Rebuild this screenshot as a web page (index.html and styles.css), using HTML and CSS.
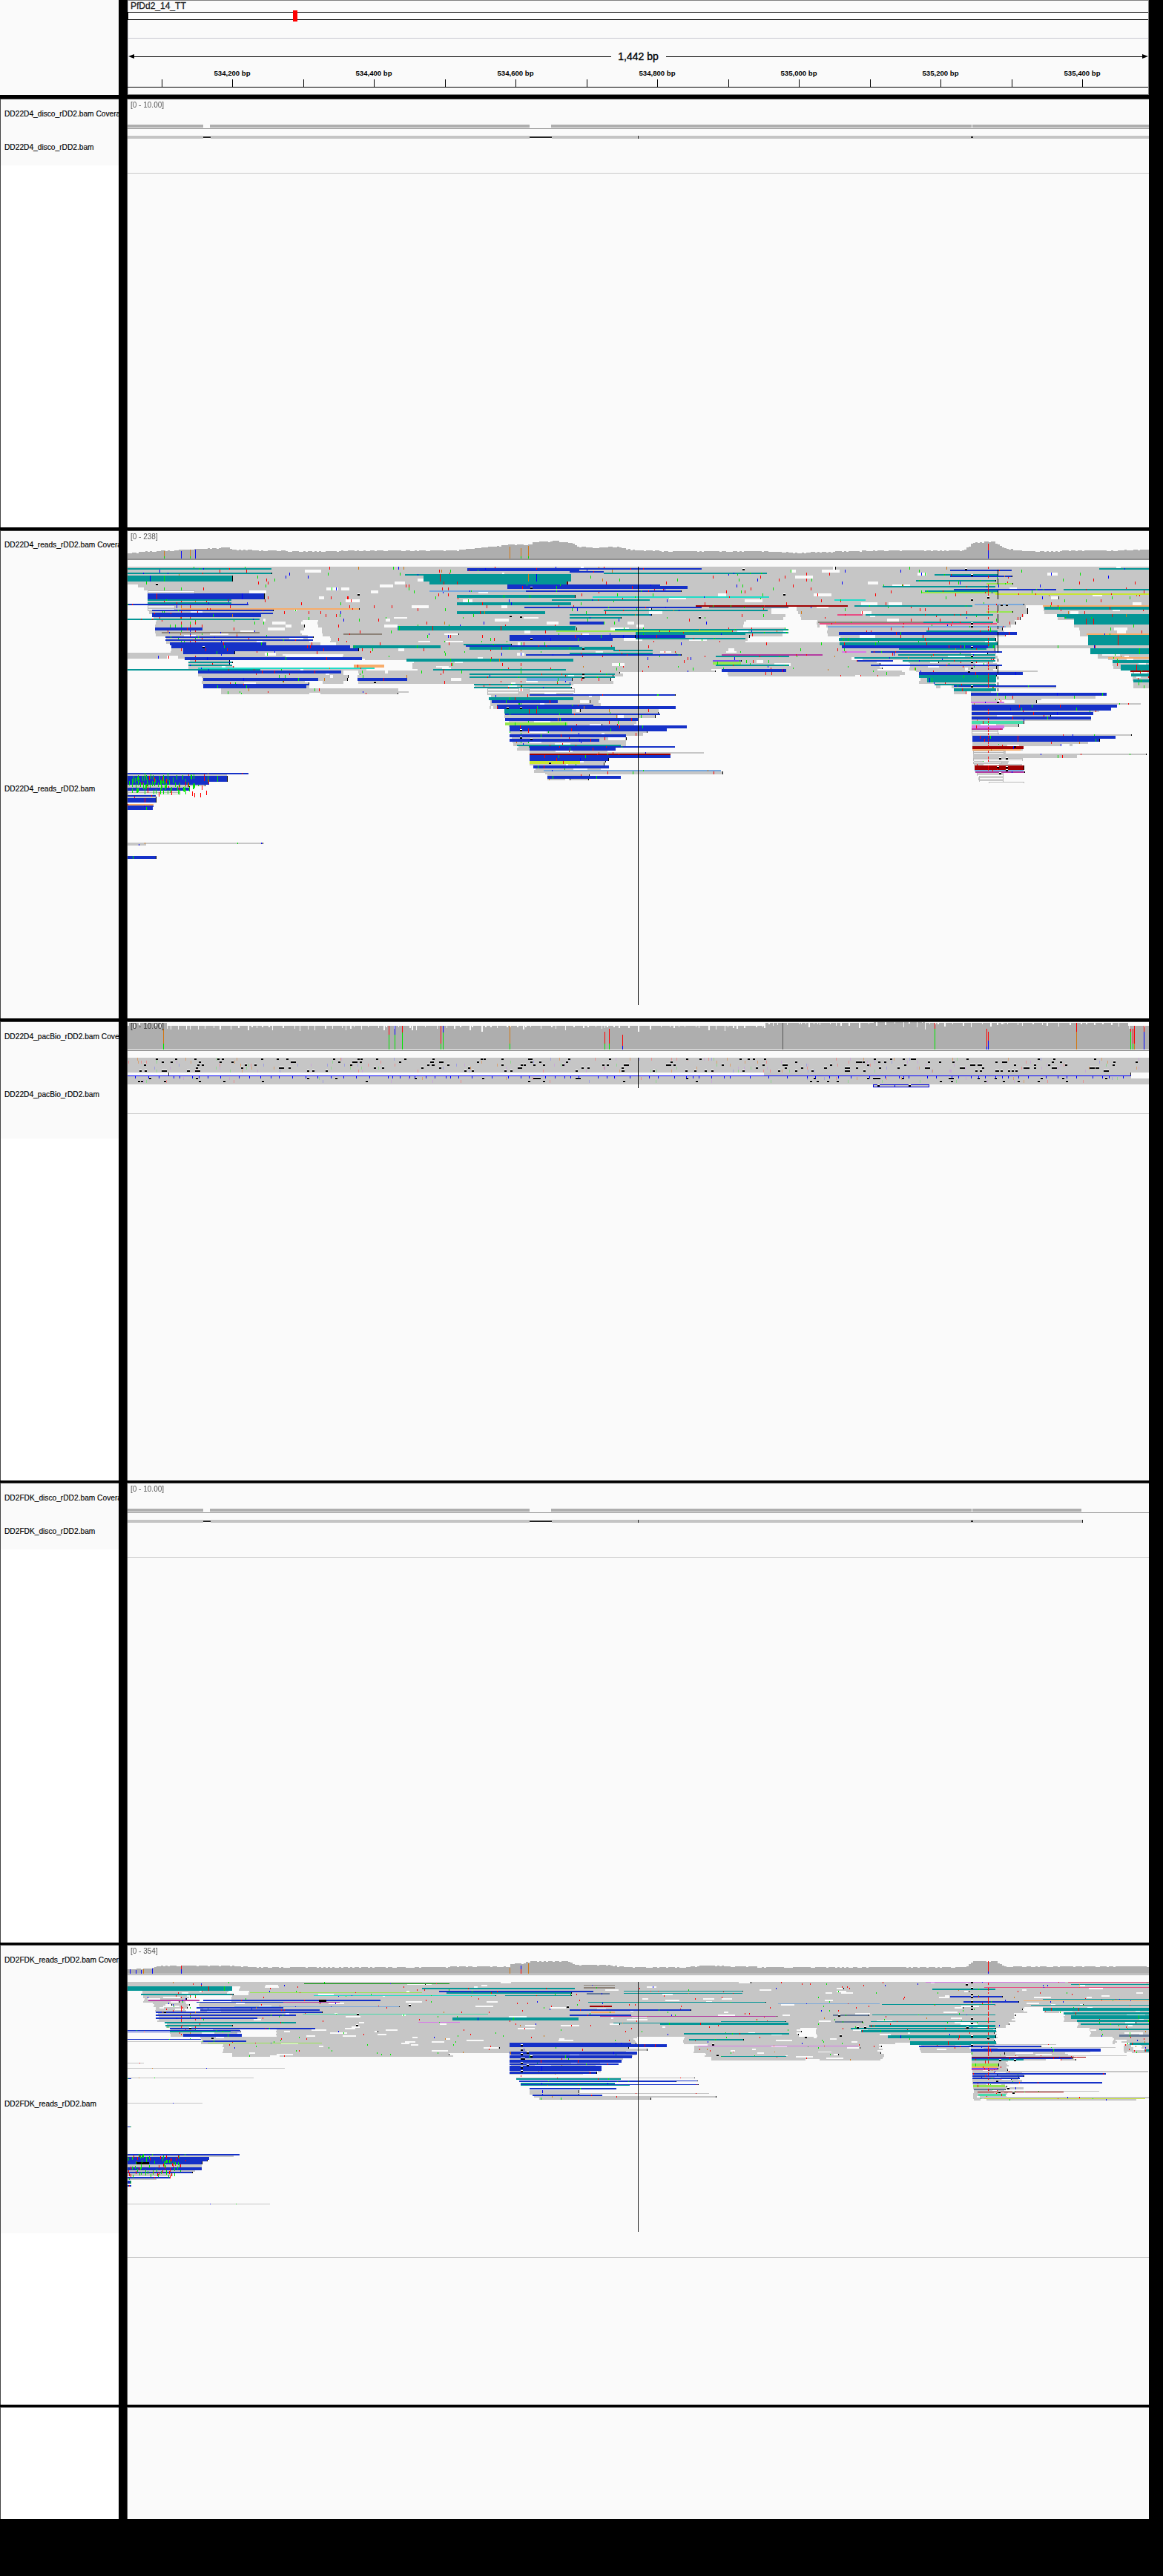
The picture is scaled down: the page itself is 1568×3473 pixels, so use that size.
FILE: index.html
```html
<!DOCTYPE html>
<html lang="en">
<head>
  <meta charset="UTF-8">
  <title>IGV - PfDd2_14_TT</title>
  <link rel="stylesheet" href="styles.css">
</head>
<body>

  <div class="panel panel-header">
    <div class="names names-header"></div>
    <div class="gutter gutter-header"></div>
    <div class="data data-header">
      <div class="chrom-name">PfDd2_14_TT</div>
      <div class="ideogram"><span class="cyto-band"></span></div>
      <div class="ruler">
        <div class="span-line">
          <i class="arrow arrow-left"></i>
          <i class="span-rule"></i>
          <span class="span-label">1,442 bp</span>
          <i class="span-rule"></i>
          <i class="arrow arrow-right"></i>
        </div>
        <div class="scale" id="scale"></div>
      </div>
      <div class="ruler-box"></div>
    </div>
    <div class="edge"></div>
  </div>

  <div class="panel panel-1">
    <div class="names">
      <div class="track-name h39">DD22D4_disco_rDD2.bam Coverage</div>
      <div class="track-name h50">DD22D4_disco_rDD2.bam</div>
    </div>
    <div class="gutter"></div>
    <div class="data"><canvas id="disco-a"></canvas><span class="range">[0 - 10.00]</span></div>
    <div class="edge"></div>
  </div>

  <div class="panel panel-2">
    <div class="names">
      <div class="track-name h37">DD22D4_reads_rDD2.bam Coverage</div>
      <div class="track-name h620">DD22D4_reads_rDD2.bam</div>
    </div>
    <div class="gutter"></div>
    <div class="data"><canvas id="reads-a"></canvas><span class="range">[0 - 238]</span></div>
    <div class="edge"></div>
  </div>

  <div class="panel panel-3">
    <div class="names">
      <div class="track-name h38">DD22D4_pacBio_rDD2.bam Coverage</div>
      <div class="track-name h119">DD22D4_pacBio_rDD2.bam</div>
    </div>
    <div class="gutter"></div>
    <div class="data"><canvas id="pacbio"></canvas><span class="range range-tight">[0 - 10.00]</span></div>
    <div class="edge"></div>
  </div>

  <div class="panel panel-4">
    <div class="names">
      <div class="track-name h39">DD2FDK_disco_rDD2.bam Coverage</div>
      <div class="track-name h50">DD2FDK_disco_rDD2.bam</div>
    </div>
    <div class="gutter"></div>
    <div class="data"><canvas id="disco-b"></canvas><span class="range">[0 - 10.00]</span></div>
    <div class="edge"></div>
  </div>

  <div class="panel panel-5">
    <div class="names">
      <div class="track-name h39">DD2FDK_reads_rDD2.bam Coverage</div>
      <div class="track-name h349">DD2FDK_reads_rDD2.bam</div>
    </div>
    <div class="gutter"></div>
    <div class="data"><canvas id="reads-b"></canvas><span class="range">[0 - 354]</span></div>
    <div class="edge"></div>
  </div>

  <div class="panel panel-6">
    <div class="names"></div>
    <div class="gutter"></div>
    <div class="data"></div>
    <div class="edge"></div>
  </div>

  <script src="tracks.js"></script>
</body>
</html>
```

FILE: styles.css
```css
html, body {
  margin: 0;
  background: #000;
}

body {
  height: 3473px;
  overflow: hidden;
  font-family: "Liberation Sans", Arial, sans-serif;
  color: #000;
}

.panel {
  display: flex;
}

.panel-header { height: 128px; }
.panel-1 { height: 578px; margin-top: 5px; }
.panel-2 { height: 658px; margin-top: 4px; }
.panel-3 { height: 619px; margin-top: 4px; }
.panel-4 { height: 620px; margin-top: 3px; }
.panel-5 { height: 620px; margin-top: 3px; }
.panel-6 { height: 151px; margin-top: 3px; }

.names {
  width: 160px;
  box-sizing: border-box;
  background: #fff;
  border-left: 1px solid #444;
  border-top: 1px solid #444;
}

.names-header {
  background: #fafafa;
  border: none;
}

.gutter {
  width: 12px;
  box-sizing: border-box;
  background: #000;
  border-right: 1px solid #444;
}

.gutter-header {
  border-right: none;
}

.edge {
  width: 19px;
  background: #000;
}

.data {
  position: relative;
  width: 1377px;
  box-sizing: border-box;
  background: #fafafa;
  border-top: 1px solid #444;
}

.data canvas {
  display: block;
  width: 100%;
  height: 100%;
}

.track-name {
  display: flex;
  align-items: center;
  box-sizing: border-box;
  padding-left: 5px;
  background: #fafafa;
  overflow: hidden;
  white-space: nowrap;
  font-size: 10.2px;
  -webkit-text-stroke: 0.15px #000;
}

.h37 { height: 37px; }
.h38 { height: 38px; }
.h39 { height: 39px; }
.h50 { height: 50px; }
.h119 { height: 119px; }
.h349 { height: 349px; }
.h620 { height: 620px; }

.range {
  position: absolute;
  left: 4px;
  top: 2px;
  font-size: 10px;
  line-height: 12px;
  color: #555;
}

.range-tight {
  top: 0;
  color: #333;
}

/* header */
.data-header {
  border-top: 1px solid #808080;
  border-left: 1px solid #c8c8d0;
  border-right: 1px solid #808080;
  border-bottom: 1px solid #808080;
  display: flex;
  flex-direction: column;
}

.chrom-name {
  height: 15px;
  padding-left: 3px;
  font-size: 12px;
  line-height: 15px;
  color: #222;
  -webkit-text-stroke: 0.3px #222;
}

.ideogram {
  position: relative;
  height: 9px;
  margin-left: -1px;
  background: #fff;
  border: 1px solid #000;
  border-right: none;
}

.cyto-band {
  position: absolute;
  left: 222px;
  top: -3px;
  width: 6px;
  height: 15px;
  background: #ff0000;
}

.ruler {
  position: relative;
  height: 65px;
  margin-top: 24px;
  border-top: 1px solid #c8c8d0;
}

.span-line {
  display: flex;
  align-items: center;
  height: 16px;
  margin-top: 16px;
}

.span-rule {
  flex: 1;
  height: 1px;
  background: #000;
}

.span-label {
  width: 74px;
  text-align: center;
  font-size: 14px;
  line-height: 16px;
  -webkit-text-stroke: 0.35px #000;
}

.arrow {
  width: 0;
  height: 0;
  border-top: 3px solid transparent;
  border-bottom: 3px solid transparent;
}

.arrow-left { border-right: 8px solid #000; }
.arrow-right { border-left: 8px solid #000; }

.scale {
  position: absolute;
  left: 0;
  right: 0;
  top: 0;
  bottom: 0;
}

.tick {
  position: absolute;
  top: 55px;
  width: 1px;
  height: 10px;
  background: #000;
}

.tick-label {
  position: absolute;
  top: 41px;
  transform: translateX(-50%);
  white-space: nowrap;
  font-size: 9.6px;
  line-height: 12px;
  font-weight: bold;
}

.ruler-box {
  flex: 1;
  margin-left: -1px;
  border-top: 1px solid #000;
}
```

FILE: tracks.js
```js
// draws the ruler ticks and every track canvas. all coords are page pixels.
const LEFT = 172, RIGHT = 1549;
const GRAY = '#c6c6c6', COV = '#aeaeae', RED = '#ff0000', GREEN = '#00e600', BLUE = '#0000ff', ORANGE = '#d27814';

const COLORS = {
  b: '#1531c8', t: '#049696', g: GRAY, o: '#f8ac6a', d: '#a00000', l: '#96e650', y: '#c8e632',
  c: '#20dcc8', s: '#78a8dc', p: '#e84c84', u: '#b43ca0', v: '#d878e8', a: '#8c8278', e: '#647896',
  m: '#46dcaa', i: '#7850f0', f: '#009000'
};

let seed = 12345;
function rnd() {
  seed = (seed * 1664525 + 1013904223) % 4294967296;
  return seed / 4294967296;
}

function setup(id) {
  const canvas = document.getElementById(id);
  const box = canvas.getBoundingClientRect();
  canvas.width = box.width;
  canvas.height = box.height;
  const ctx = canvas.getContext('2d');
  ctx.translate(-box.left, -box.top);
  return ctx;
}

function bar(ctx, color, x0, y, x1, h) {
  ctx.fillStyle = color;
  ctx.fillRect(Math.round(x0), y, Math.round(x1 - x0), h);
}

function snpColor() {
  const r = rnd();
  if (r < 0.45) return RED;
  if (r < 0.78) return GREEN;
  if (r < 0.92) return BLUE;
  return ORANGE;
}

function sprinkle(ctx, x0, x1, y, h, rate) {
  const n = (x1 - x0) * rate;
  for (let i = 0; i < n; i++) {
    ctx.fillStyle = snpColor();
    ctx.fillRect(Math.round(x0 + rnd() * (x1 - x0)), y, 1, h);
  }
}

function dot(ctx, x, y, wide) {
  bar(ctx, '#fff', x - 1, y - 1, x + (wide ? 6 : 2), 1);
  bar(ctx, '#000', x - 1, y, x + (wide ? 6 : 2), 2);
}

function coverage(ctx, pts, base, sep, snps) {
  ctx.fillStyle = COV;
  ctx.beginPath();
  ctx.moveTo(LEFT, base);
  let prevY = base;
  // stepped outline, one small plateau every few pixels
  for (let x = LEFT; x < RIGHT; x += 3) {
    let y = pts[pts.length - 1][1];
    for (let i = 1; i < pts.length; i++) {
      if (x <= pts[i][0]) {
        const k = (x - pts[i - 1][0]) / (pts[i][0] - pts[i - 1][0]);
        y = pts[i - 1][1] + k * (pts[i][1] - pts[i - 1][1]);
        break;
      }
    }
    y = Math.round(y + (rnd() > 0.7 ? 1 : 0));
    ctx.lineTo(x, prevY);
    ctx.lineTo(x, y);
    prevY = y;
  }
  ctx.lineTo(RIGHT, prevY);
  ctx.lineTo(RIGHT, base);
  ctx.fill();
  bar(ctx, '#909090', LEFT, sep, RIGHT, 1);
  snps.forEach(s => {
    let y = s[1];
    for (let i = 2; i < s.length; i += 2) {
      bar(ctx, s[i + 1], s[0], y, s[0] + 1, s[i] - y);
      y = s[i];
    }
  });
}

function hatch(ctx, x0, y, x1, h) {
  bar(ctx, '#fff', x0, y, x1, h);
  for (let i = 0; i < h; i += 2) bar(ctx, '#b8b8b8', x0, y + i, x1, 1);
  bar(ctx, '#b8b8b8', x0, y, x0 + 1, h);
  bar(ctx, '#b8b8b8', x1 - 1, y, x1, h);
}

function drawReads(ctx, o) {
  for (let b = 0; b < o.bands.length - 1; b++) {
    const yEnd = o.bands[b + 1][0];
    for (let y = o.bands[b][0]; y < yEnd; y += o.pitch) {
      o.bands[b][1].forEach(span => {
        let x0 = span[0], x1 = span[1];
        if (x0 > LEFT) x0 += Math.floor(rnd() * 3);
        if (x1 < RIGHT) x1 -= Math.floor(rnd() * 8);
        if (x1 <= x0) return;
        bar(ctx, GRAY, x0, y, x1, o.pitch);
        if (x1 < RIGHT && rnd() < 0.25) bar(ctx, '#000', x1, y, x1 + 1, o.pitch);
        const gaps = (x1 - x0) * o.gapRate;
        for (let i = 0; i < gaps; i++) {
          const gx = x0 + rnd() * (x1 - x0);
          const gw = 3 + rnd() * 22;
          if (gx + gw < x1) {
            bar(ctx, '#fafafa', gx, y, gx + gw, o.pitch);
            if (rnd() < 0.12) bar(ctx, '#000', gx + gw, y, gx + gw + 1, o.pitch);
          }
        }
        sprinkle(ctx, x0, x1, y, o.pitch, o.snpRate);
      });
      o.hot.forEach(h => {
        if (y >= h[1] && y < h[2] && rnd() < h[3]) bar(ctx, h[4] || snpColor(), h[0], y, h[0] + 1, o.pitch);
      });
    }
  }
  o.bars.forEach(r => {
    const x0 = r[2], x1 = r[3];
    if (r[0] === 'h') {
      hatch(ctx, x0, r[1], x1, r[4]);
      return;
    }
    bar(ctx, COLORS[r[0]], x0, r[1], x1, r[4]);
    sprinkle(ctx, x0, x1, r[1], r[4], o.barSnpRate);
    if (x1 < RIGHT && x1 - x0 > 20 && rnd() < 0.3) bar(ctx, '#000', x1, r[1], x1 + 1, r[4]);
  });
  o.hot.forEach(h => {
    if (!h[5]) return;
    for (let y = h[1]; y < h[2]; y += o.pitch) {
      if (rnd() < h[3]) bar(ctx, h[4], h[0], y, h[0] + 1, o.pitch);
    }
  });
  o.dots.forEach(d => dot(ctx, d[0], d[1]));
}

function drawDisco(id, top, endX, sepY) {
  const ctx = setup(id);
  bar(ctx, COV, LEFT, top + 35, 274, 4);
  bar(ctx, COV, 283, top + 35, 714, 4);
  bar(ctx, COV, 743, top + 35, 1310, 4);
  bar(ctx, COV, 1311, top + 35, endX, 4);
  bar(ctx, '#909090', LEFT, top + 40, RIGHT, 1);
  bar(ctx, '#c4c4c4', LEFT, top + 50, endX + 1, 4);
  [[274, 284], [714, 744]].forEach(g => {
    bar(ctx, '#fafafa', g[0], top + 50, g[1], 1);
    bar(ctx, '#222', g[0], top + 51, g[1], 2);
    bar(ctx, '#fafafa', g[0], top + 53, g[1], 1);
  });
  bar(ctx, '#222', 860, top + 50, 861, 4);
  bar(ctx, '#222', 1309, top + 51, 1312, 2);
  if (endX < RIGHT - 1) bar(ctx, '#222', endX + 1, top + 50, endX + 2, 4);
  bar(ctx, '#c8c8c8', LEFT, sepY, RIGHT, 1);
}

function drawPacbio() {
  const ctx = setup('pacbio');
  // coverage blocks with nicks along the top
  [[172, 225, 1379], [225, 1030, 1383], [1030, 1177, 1379], [1177, 1247, 1377], [1247, 1522, 1379], [1522, RIGHT, 1383]].forEach(p => {
    bar(ctx, COV, p[0], p[2], p[1], 1415 - p[2]);
    for (let x = p[0]; x < p[1]; x += 3 + Math.floor(rnd() * 14)) {
      bar(ctx, '#fafafa', x, p[2], x + 1 + Math.floor(rnd() * 2), 2 + Math.floor(rnd() * rnd() * 8));
    }
  });
  bar(ctx, '#fff', LEFT, 1415, RIGHT, 1);
  bar(ctx, '#808080', LEFT, 1416, RIGHT, 1);
  [
    [220, 1387, 1407, ORANGE, GREEN], [524, 1383, 1395, RED, GREEN], [532, 1383, 1395, BLUE, GREEN],
    [542, 1383, 1392, RED, GREEN], [594, 1383, 1407, RED, GREEN], [597, 1383, 1392, BLUE, GREEN],
    [687, 1383, 1407, ORANGE, GREEN], [815, 1391, 1407, RED, GREEN], [821, 1387, 1407, RED, GREEN],
    [839, 1395, 1410, RED, BLUE], [1260, 1379, 1387, RED, GREEN], [1330, 1387, 1411, RED, BLUE],
    [1332, 1391, 1403, RED, BLUE], [1451, 1379, 1391, RED, ORANGE], [1524, 1387, 1391, RED, GREEN],
    [1527, 1387, 1407, RED, GREEN], [1529, 1383, 1407, RED, ORANGE], [1542, 1383, 1391, RED, BLUE]
  ].forEach(s => {
    bar(ctx, s[3], s[0], s[1], s[0] + 1, s[2] - s[1]);
    bar(ctx, s[4], s[0], s[2], s[0] + 1, 1415 - s[2]);
  });
  bar(ctx, '#555', 1055, 1379, 1056, 36);

  // bam rows
  bar(ctx, GRAY, LEFT, 1426, RIGHT, 20);
  bar(ctx, GRAY, 1030, 1446, 1525, 4);
  bar(ctx, GRAY, LEFT, 1451, RIGHT, 11);
  bar(ctx, '#fafafa', 1525, 1450, RIGHT, 4);
  bar(ctx, BLUE, LEFT, 1450, 1525, 1);
  const pale = ['#e89090', '#90d890', '#a0a0e0', '#d8a070', '#c8a8d8'];
  [1426, 1430, 1434, 1438, 1442, 1452, 1456].forEach((y, i) => {
    const n = i < 5 ? 36 : 22;
    for (let k = 0; k < n; k++) {
      ctx.fillStyle = pale[Math.floor(rnd() * pale.length)];
      ctx.fillRect(Math.round(LEFT + rnd() * 1370), y, 1, 4);
    }
    for (let k = 0; k < n; k++) {
      const x = LEFT + 2 + rnd() * 1370;
      dot(ctx, x, y + 1, rnd() < 0.1);
    }
  });
  for (let x = LEFT + 10; x < 1525; x += 6 + Math.floor(rnd() * 22)) {
    bar(ctx, BLUE, x, 1451, x + 1, 3);
  }
  bar(ctx, '#222', 227, 1446, 228, 4);
  bar(ctx, '#222', 1524, 1446, 1525, 4);
  ctx.strokeStyle = '#0000e0';
  ctx.lineWidth = 1;
  ctx.fillStyle = GRAY;
  ctx.fillRect(1177, 1462, 75, 4);
  ctx.strokeRect(1177.5, 1462.5, 75, 3);
  bar(ctx, '#0000e0', 1206, 1462, 1207, 4);
  dot(ctx, 1184, 1463);
  dot(ctx, 1226, 1463);
  bar(ctx, '#000', 860, 1426, 861, 41);
  bar(ctx, '#c8c8c8', LEFT, 1501, RIGHT, 1);
}

function drawReadsA() {
  const ctx = setup('reads-a');
  coverage(ctx, [
    [172, 746], [199, 743], [230, 742], [265, 740], [306, 738], [316, 741], [408, 743], [510, 742],
    [612, 742], [663, 737], [686, 734], [700, 734], [709, 735], [719, 731], [750, 729], [770, 732],
    [780, 737], [800, 738], [830, 737], [850, 741], [900, 743], [1023, 743], [1074, 745], [1176, 742],
    [1299, 742], [1311, 731], [1340, 730], [1350, 738], [1380, 743], [1482, 742], [1549, 741]
  ], 753, 753, [
    [221, 743, 750, ORANGE, 753, GREEN], [244, 743, 753, BLUE], [256, 741, 750, ORANGE, 753, GREEN],
    [263, 741, 753, BLUE], [687, 737, 753, ORANGE], [702, 739, 750, ORANGE, 753, GREEN],
    [712, 736, 750, ORANGE, 753, GREEN], [1332, 733, 742, RED, 753, BLUE]
  ]);
  bar(ctx, '#909090', LEFT, 754, RIGHT, 1);

  drawReads(ctx, {
    pitch: 4,
    gapRate: 0.002,
    snpRate: 0.009,
    barSnpRate: 0.012,
    bands: [
      [764, [[172, RIGHT]]],
      [788, [[184, RIGHT]]],
      [792, [[192, RIGHT]]],
      [796, [[199, RIGHT]]],
      [816, [[199, 1043], [1074, 1385], [1406, RIGHT]]],
      [828, [[205, 1060], [1078, 1380], [1424, RIGHT]]],
      [834, [[209, 411], [428, 1008], [1100, 1370], [1447, RIGHT]]],
      [846, [[209, 410], [434, 1060], [1115, 1355], [1455, RIGHT]]],
      [856, [[223, 422], [444, 1010], [1131, 1345], [1467, RIGHT]]],
      [866, [[229, 1345], [1469, RIGHT]]],
      [880, [[172, 385], [462, 1345], [1480, RIGHT]]],
      [886, [[249, 488], [490, 1345], [1494, RIGHT]]],
      [890, [[254, 316], [556, 1188], [1225, 1345], [1500, RIGHT]]],
      [900, [[267, 500], [561, 964], [981, 1188], [1225, 1345], [1513, RIGHT]]],
      [904, [[267, 470], [482, 840], [981, 1220], [1239, 1343], [1526, RIGHT]]],
      [910, [[272, 470], [482, 830], [1239, 1343], [1526, RIGHT]]],
      [920, [[274, 417], [638, 776], [1260, 1343], [1528, RIGHT]]],
      [928, [[298, 537], [657, 775], [1286, 1343]]],
      [936, [[660, 814], [1309, 1400]]],
      [956, [[680, 890], [1310, 1420]]],
      [968, [[684, 860], [1310, 1380]]],
      [980, [[687, 872], [1310, 1352]]],
      [990, [[690, 844], [1311, 1450]]],
      [1004, [[697, 791], [1311, 1380]]],
      [1012, [[714, 820], [1312, 1360]]],
      [1030, [[720, 810], [1314, 1380]]],
      [1040, [[736, 800], [1318, 1346]]],
      [1050, []]
    ],
    hot: [
      [221, 790, 850, 0.55], [244, 790, 880, 0.5], [256, 790, 880, 0.45], [263, 790, 890, 0.45], [272, 840, 880, 0.4],
      [702, 856, 1000, 0.4], [712, 960, 1000, 0.4]
    ],
    bars: [
      ['t', 766, 172, 366, 2], ['b', 766, 630, 946, 2], ['b', 768, 630, 781, 2], ['t', 772, 172, 366, 2], ['t', 772, 814, 1034, 2],
      ['b', 770, 768, 814, 2], ['t', 776, 172, 313, 8], ['t', 774, 546, 571, 2], ['t', 774, 571, 770, 10], ['t', 784, 579, 765, 4],
      ['b', 788, 684, 890, 2], ['b', 790, 684, 927, 4], ['b', 796, 709, 918, 2], ['s', 796, 579, 709, 2], ['h', 796, 199, 263, 4],
      ['b', 800, 199, 356, 8], ['t', 802, 616, 775, 4], ['c', 804, 799, 1037, 2], ['t', 808, 199, 312, 2], ['t', 808, 744, 876, 2],
      ['t', 812, 199, 312, 2], ['b', 814, 172, 335, 2], ['t', 812, 616, 770, 4], ['h', 816, 199, 236, 6], ['b', 818, 707, 946, 2],
      ['o', 820, 244, 484, 2], ['b', 822, 205, 368, 2], ['b', 826, 205, 368, 2], ['b', 828, 205, 352, 4], ['t', 824, 616, 735, 4],
      ['t', 834, 172, 350, 2], ['b', 846, 209, 273, 4], ['t', 844, 536, 776, 6], ['a', 852, 218, 350, 2], ['a', 854, 463, 515, 2],
      ['l', 850, 750, 987, 2], ['b', 858, 223, 422, 2], ['b', 862, 223, 422, 2], ['b', 856, 687, 856, 4], ['b', 860, 687, 826, 4],
      ['t', 852, 857, 1063, 2], ['t', 848, 829, 1063, 2], ['t', 854, 857, 1005, 2], ['t', 860, 857, 1005, 2],
      ['b', 866, 229, 359, 4], ['b', 870, 231, 472, 4], ['b', 874, 247, 483, 4], ['b', 878, 247, 316, 4], ['t', 870, 476, 594, 4],
      ['t', 868, 625, 689, 2], ['b', 870, 628, 781, 2], ['t', 872, 633, 829, 4], ['t', 876, 827, 880, 2], ['t', 880, 768, 880, 2],
      ['b', 882, 709, 918, 2], ['b', 886, 249, 488, 4], ['t', 888, 548, 773, 4], ['t', 892, 254, 313, 2], ['t', 896, 254, 313, 2],
      ['o', 896, 477, 518, 4], ['c', 900, 267, 505, 2], ['t', 902, 172, 351, 2], ['t', 902, 584, 763, 2], ['b', 904, 267, 460, 4],
      ['t', 908, 633, 829, 2], ['t', 912, 633, 829, 2], ['b', 914, 274, 429, 4], ['b', 914, 482, 549, 4], ['s', 914, 710, 771, 4],
      ['b', 922, 274, 417, 2], ['b', 924, 274, 413, 4], ['g', 928, 298, 537, 4], ['g', 932, 311, 551, 2], ['t', 922, 639, 770, 2], ['t', 926, 639, 770, 2],
      ['h', 928, 657, 700, 9], ['h', 928, 713, 775, 6], ['b', 936, 714, 910, 2], ['t', 940, 659, 773, 4], ['b', 944, 663, 752, 4],
      ['b', 950, 670, 800, 2], ['b', 952, 670, 911, 4], ['t', 956, 680, 771, 6], ['b', 962, 681, 890, 2], ['b', 968, 681, 860, 4],
      ['l', 974, 681, 765, 4], ['b', 978, 687, 926, 4], ['b', 982, 687, 899, 4], ['b', 990, 687, 844, 4], ['b', 996, 687, 808, 4],
      ['t', 1004, 697, 837, 2], ['b', 1006, 714, 910, 2], ['b', 1008, 714, 830, 4], ['g', 1014, 714, 949, 2], ['d', 1016, 714, 904, 2],
      ['b', 1018, 714, 904, 4], ['b', 1022, 714, 820, 4], ['y', 1026, 714, 782, 4], ['b', 1032, 719, 821, 4], ['s', 1038, 733, 972, 2],
      ['g', 1040, 735, 974, 4], ['b', 1046, 738, 837, 4],
      // left edge cluster
      ['b', 1042, 172, 335, 2], ['g', 1044, 172, 306, 2], ['b', 1046, 172, 306, 8], ['b', 1054, 172, 282, 4], ['g', 1058, 172, 276, 2],
      ['g', 1060, 172, 255, 2], ['b', 1062, 172, 255, 4], ['h', 1066, 172, 243, 6], ['b', 1072, 172, 210, 2], ['g', 1074, 172, 210, 2],
      ['b', 1076, 172, 210, 6], ['o', 1084, 172, 207, 2], ['b', 1086, 172, 207, 2], ['b', 1088, 172, 206, 4], ['g', 1136, 172, 354, 2],
      ['g', 1138, 172, 197, 2], ['b', 1154, 172, 210, 4],
      // middle funnel
      ['d', 816, 938, 1143, 2], ['e', 818, 956, 1063, 2], ['t', 822, 814, 1035, 2], ['t', 816, 1152, 1311, 2], ['b', 818, 768, 946, 2],
      ['p', 828, 1129, 1163, 2], ['t', 828, 1167, 1339, 2], ['t', 828, 768, 878, 2], ['c', 808, 1125, 1167, 2], ['t', 832, 768, 837, 2],
      ['b', 838, 768, 815, 4], ['a', 838, 1103, 1245, 2], ['t', 838, 1245, 1339, 2], ['p', 840, 1105, 1344, 2], ['s', 844, 1116, 1356, 2],
      ['b', 852, 1131, 1371, 4], ['t', 850, 1249, 1345, 2], ['b', 856, 857, 924, 4], ['t', 860, 1131, 1342, 4], ['t', 866, 1132, 1345, 4],
      ['b', 870, 1135, 1332, 4], ['t', 870, 1332, 1345, 4], ['b', 882, 768, 918, 2], ['u', 882, 973, 1109, 2], ['t', 884, 965, 1064, 2],
      ['v', 878, 1135, 1168, 2], ['b', 878, 1174, 1351, 2], ['t', 874, 1212, 1330, 2], ['t', 882, 1211, 1342, 2], ['t', 886, 1152, 1342, 2],
      ['b', 890, 1155, 1204, 2], ['t', 890, 1217, 1342, 2], ['i', 890, 961, 999, 2], ['l', 892, 961, 999, 4], ['t', 896, 965, 1064, 2],
      ['b', 896, 1174, 1351, 2], ['g', 900, 967, 1189, 2], ['b', 902, 973, 1060, 4], ['g', 906, 981, 1220, 4], ['g', 904, 768, 964, 2],
      ['b', 906, 1239, 1379, 4], ['g', 904, 1235, 1399, 2], ['t', 910, 1239, 1343, 4], ['t', 914, 1250, 1343, 6], ['t', 922, 1260, 1343, 2],
      ['b', 924, 1286, 1424, 2], ['g', 926, 1286, 1424, 2], ['t', 928, 1286, 1343, 4],
      // right of the 1310 pile
      ['b', 934, 1309, 1492, 4], ['g', 938, 1309, 1477, 4], ['g', 942, 1309, 1404, 2], ['v', 946, 1309, 1354, 2], ['g', 948, 1310, 1538, 2],
      ['b', 950, 1310, 1506, 4], ['b', 954, 1310, 1498, 4], ['g', 958, 1310, 1482, 2], ['b', 960, 1310, 1474, 4], ['b', 966, 1310, 1471, 4],
      ['g', 970, 1310, 1471, 2], ['m', 972, 1310, 1379, 4], ['v', 978, 1310, 1354, 4], ['u', 982, 1310, 1352, 2], ['h', 984, 1310, 1346, 6],
      ['g', 990, 1311, 1525, 2], ['b', 992, 1311, 1504, 4], ['b', 996, 1311, 1482, 4], ['g', 1000, 1311, 1467, 3], ['d', 1006, 1311, 1380, 4],
      ['o', 1010, 1311, 1376, 2], ['h', 1012, 1312, 1354, 4], ['g', 1016, 1312, 1545, 2], ['g', 1018, 1312, 1452, 4], ['h', 1022, 1312, 1379, 4],
      ['h', 1027, 1312, 1351, 3], ['d', 1032, 1314, 1380, 6], ['s', 1038, 1314, 1380, 2], ['u', 1040, 1315, 1381, 2], ['h', 1042, 1317, 1353, 4],
      ['h', 1046, 1320, 1353, 8], ['h', 1054, 1333, 1381, 2],
      // top right
      ['t', 766, 1482, RIGHT, 2], ['y', 800, 1342, RIGHT, 2], ['l', 798, 1243, 1345, 2], ['t', 794, 1434, RIGHT, 2], ['b', 794, 1286, 1424, 2],
      ['b', 768, 1281, 1364, 2], ['b', 776, 1281, 1364, 2], ['t', 774, 1260, 1345, 2], ['t', 782, 1235, 1342, 2], ['l', 786, 1330, 1365, 2],
      ['l', 824, 1330, 1365, 2], ['t', 790, 1190, 1342, 2], ['t', 796, 1247, 1345, 2], ['o', 816, 1406, RIGHT, 2], ['t', 818, 1408, RIGHT, 4],
      ['t', 828, 1425, RIGHT, 4], ['t', 832, 1435, RIGHT, 2], ['t', 834, 1448, RIGHT, 8], ['o', 854, 1465, RIGHT, 2], ['t', 856, 1467, RIGHT, 14],
      ['g', 870, 1342, RIGHT, 4], ['t', 874, 1470, RIGHT, 8], ['o', 886, 1494, RIGHT, 2], ['t', 890, 1500, RIGHT, 4], ['t', 896, 1511, RIGHT, 8],
      ['d', 904, 1524, RIGHT, 2], ['t', 908, 1525, RIGHT, 4], ['t', 916, 1528, RIGHT, 4], ['s', 814, 1314, 1380, 2]
    ],
    dots: [
      [211, 787], [483, 801], [274, 872], [716, 792], [716, 861], [688, 830], [702, 831], [684, 954], [702, 954], [702, 984],
      [702, 994], [716, 996], [741, 1028], [505, 919], [786, 874], [786, 908], [786, 913], [943, 832], [1057, 801], [1002, 767],
      [1302, 767], [1310, 775], [1332, 805], [1350, 815], [1357, 815], [1310, 808], [1310, 840], [1310, 844], [1310, 872],
      [1310, 884], [1310, 892], [1310, 900], [1306, 905], [1310, 925], [1368, 1006], [1345, 946], [1348, 1022], [1357, 1022],
      [1345, 1034], [1357, 1034], [1357, 1038], [1348, 1042]
    ]
  });

  // the red column over the pile and the long guide line
  for (let y = 764; y < 1040; y += 4) {
    if (rnd() < 0.6) bar(ctx, RED, 1332, y, 1333, 3);
  }
  for (let y = 764; y < 930; y += 4) {
    if (rnd() < 0.6) bar(ctx, '#000', 1345, y, 1346, 4);
  }
  for (let i = 0; i < 90; i++) {
    ctx.fillStyle = GREEN;
    ctx.fillRect(Math.round(172 + rnd() * 90), 1042 + Math.floor(rnd() * 24), 1, 6);
  }
  for (let i = 0; i < 18; i++) {
    ctx.fillStyle = RED;
    ctx.fillRect(Math.round(172 + rnd() * 110), 1046 + Math.floor(rnd() * 26), 1, 6);
  }
  bar(ctx, '#000', 860, 764, 861, 591);
}

function drawReadsB() {
  const ctx = setup('reads-b');
  coverage(ctx, [
    [172, 2655], [200, 2653], [220, 2650], [310, 2650], [340, 2652], [520, 2652], [687, 2651], [688, 2647],
    [702, 2647], [714, 2644], [765, 2644], [775, 2649], [819, 2649], [845, 2652], [925, 2652], [947, 2650],
    [1008, 2651], [1030, 2652], [1130, 2652], [1300, 2652], [1311, 2644], [1342, 2644], [1352, 2651], [1549, 2651]
  ], 2661, 2662, [
    [175, 2655, 2661, BLUE], [183, 2656, 2661, BLUE], [190, 2656, 2661, BLUE], [193, 2655, 2661, ORANGE], [205, 2654, 2661, BLUE],
    [244, 2650, 2655, RED, 2661, BLUE], [687, 2653, 2661, ORANGE], [702, 2650, 2655, BLUE, 2661, RED], [712, 2647, 2661, ORANGE],
    [1332, 2644, 2658, RED, 2661, BLUE]
  ]);

  drawReads(ctx, {
    pitch: 2,
    gapRate: 0.0018,
    snpRate: 0.004,
    barSnpRate: 0.008,
    bands: [
      [2672, [[172, RIGHT]]],
      [2678, [[172, 313], [322, RIGHT]]],
      [2684, [[190, 313], [335, RIGHT]]],
      [2690, [[193, 255], [312, RIGHT]]],
      [2700, [[206, 255], [268, RIGHT]]],
      [2706, [[209, 255], [268, 1385], [1406, RIGHT]]],
      [2714, [[212, 1370], [1434, RIGHT]]],
      [2726, [[224, 1360], [1452, RIGHT]]],
      [2734, [[229, 326], [372, 1080], [1100, 1345], [1469, RIGHT]]],
      [2746, [[270, 860], [921, 1345], [1500, RIGHT]]],
      [2756, [[300, 850], [935, 1190], [1240, 1345], [1515, RIGHT]]],
      [2767, [[311, 612], [687, 860], [950, 1193], [1309, 1440]]],
      [2772, [[687, 840], [957, 1194], [1310, 1450]]],
      [2778, [[687, 810], [1310, 1360]]],
      [2794, [[1311, 1380]]],
      [2810, [[1312, 1360]]],
      [2832, []]
    ],
    hot: [
      [244, 2690, 2750, 0.5, RED], [256, 2690, 2750, 0.3], [263, 2690, 2740, 0.3], [702, 2756, 2800, 0.3], [1332, 2672, 2820, 0.5, RED, true]
    ],
    bars: [
      ['f', 2674, 410, 606, 1], ['t', 2678, 172, 313, 6], ['t', 2680, 569, 775, 2], ['b', 2684, 592, 800, 2], ['l', 2686, 337, 569, 1],
      ['t', 2688, 190, 314, 2], ['t', 2686, 602, 770, 2], ['c', 2690, 423, 668, 1], ['t', 2690, 681, 770, 1], ['u', 2696, 200, 269, 2],
      ['b', 2696, 274, 513, 2], ['u', 2699, 265, 458, 1], ['b', 2699, 265, 382, 1], ['s', 2705, 316, 538, 1], ['b', 2706, 265, 382, 2],
      ['b', 2709, 270, 431, 2], ['b', 2712, 210, 434, 2], ['b', 2716, 210, 399, 2], ['m', 2715, 408, 658, 1], ['b', 2720, 210, 347, 2],
      ['t', 2720, 610, 780, 4], ['t', 2726, 222, 399, 2], ['v', 2726, 564, 620, 1], ['t', 2730, 223, 313, 2], ['b', 2734, 229, 425, 2],
      ['b', 2737, 172, 324, 1], ['b', 2739, 172, 324, 1], ['t', 2738, 229, 311, 2], ['b', 2742, 247, 326, 4], ['b', 2749, 172, 271, 1],
      ['b', 2751, 274, 332, 2], ['l', 2754, 280, 434, 1], ['g', 2752, 172, 274, 1], ['g', 2781, 172, 194, 1], ['g', 2788, 172, 384, 1],
      ['g', 2801, 172, 342, 1], ['b', 2802, 172, 177, 1], ['g', 2835, 172, 273, 1], ['b', 2867, 172, 177, 1],
      ['b', 2904, 172, 323, 2], ['g', 2906, 172, 315, 2], ['b', 2908, 172, 282, 4], ['b', 2912, 172, 279, 2], ['b', 2914, 172, 272, 4],
      ['g', 2918, 172, 272, 4], ['b', 2922, 172, 272, 4], ['g', 2926, 172, 263, 2], ['b', 2928, 172, 259, 2], ['g', 2930, 172, 233, 4],
      ['b', 2935, 172, 229, 2], ['g', 2937, 172, 211, 2], ['b', 2940, 172, 177, 4], ['b', 2946, 172, 177, 2], ['g', 2971, 172, 364, 1],
      // second funnel
      ['b', 2754, 687, 851, 2], ['b', 2756, 687, 899, 4], ['g', 2762, 687, 872, 3], ['b', 2766, 687, 859, 4], ['b', 2771, 687, 852, 4],
      ['g', 2775, 687, 840, 2], ['b', 2777, 687, 838, 4], ['b', 2782, 687, 834, 2], ['b', 2785, 687, 811, 7], ['b', 2793, 687, 804, 3],
      ['g', 2796, 687, 786, 1], ['g', 2801, 696, 936, 1], ['t', 2802, 696, 837, 2], ['b', 2805, 700, 940, 1], ['b', 2806, 700, 911, 1],
      ['t', 2808, 702, 829, 2], ['b', 2810, 702, 941, 1], ['t', 2811, 702, 849, 1], ['b', 2815, 714, 831, 2], ['g', 2818, 714, 780, 6],
      ['g', 2822, 714, 956, 1], ['b', 2824, 718, 812, 2], ['g', 2826, 720, 965, 2], ['g', 2828, 727, 877, 3],
      // top and right side
      ['v', 2672, 1248, 1436, 1], ['p', 2672, 1440, RIGHT, 1], ['t', 2675, 1444, RIGHT, 1], ['t', 2681, 1257, 1342, 2], ['p', 2679, 1327, RIGHT, 1],
      ['b', 2691, 1281, 1351, 2], ['b', 2698, 1299, 1373, 2], ['o', 2697, 1380, RIGHT, 1], ['t', 2695, 1406, RIGHT, 1], ['s', 2701, 1049, 1186, 1],
      ['t', 2702, 1189, 1342, 1], ['t', 2703, 1390, RIGHT, 1], ['t', 2707, 1406, RIGHT, 4], ['t', 2713, 1434, RIGHT, 3], ['t', 2717, 1444, RIGHT, 5],
      ['t', 2723, 1452, RIGHT, 3], ['t', 2728, 1457, RIGHT, 2], ['t', 2735, 1482, RIGHT, 2], ['e', 2743, 1509, RIGHT, 3], ['t', 2754, 1523, RIGHT, 3],
      ['t', 2763, 1543, RIGHT, 3], ['t', 2699, 793, 1032, 1], ['d', 2704, 795, 825, 2], ['b', 2709, 768, 931, 2], ['o', 2712, 797, 829, 2],
      ['u', 2718, 809, 1049, 1], ['b', 2716, 768, 851, 2], ['t', 2684, 841, 1001, 1], ['t', 2687, 841, 1001, 1], ['a', 2676, 787, 829, 1],
      ['a', 2679, 787, 829, 2], ['e', 2687, 791, 822, 2], ['t', 2727, 890, 1063, 3], ['t', 2727, 827, 890, 1], ['t', 2725, 972, 1059, 1],
      ['t', 2741, 922, 1064, 2], ['t', 2749, 929, 1002, 2], ['v', 2758, 941, 1157, 1], ['t', 2772, 972, 1060, 1], ['t', 2716, 1176, 1342, 1],
      ['e', 2716, 1123, 1171, 2], ['e', 2725, 1126, 1162, 2], ['t', 2725, 1174, 1342, 1], ['t', 2730, 1172, 1342, 3], ['t', 2734, 1147, 1342, 2],
      ['t', 2737, 1161, 1343, 3], ['t', 2744, 1197, 1342, 4], ['t', 2752, 1227, 1343, 5], ['b', 2758, 1239, 1403, 2], ['g', 2756, 1309, 1424, 1],
      ['b', 2762, 1309, 1484, 4], ['g', 2760, 1309, 1504, 1], ['g', 2766, 1309, 1470, 1], ['g', 2767, 1309, 1354, 3], ['g', 2771, 1310, 1519, 1],
      ['d', 2773, 1310, 1464, 1], ['b', 2774, 1310, 1445, 2], ['t', 2776, 1310, 1380, 2], ['g', 2778, 1310, 1352, 4], ['l', 2782, 1310, 1346, 4],
      ['o', 2786, 1310, 1345, 2], ['i', 2788, 1310, 1345, 2], ['p', 2790, 1310, 1345, 1], ['g', 2792, 1311, 1548, 2], ['b', 2795, 1311, 1491, 2],
      ['b', 2798, 1311, 1380, 2], ['b', 2801, 1311, 1375, 2], ['g', 2804, 1311, 1365, 3], ['b', 2807, 1312, 1486, 2], ['l', 2811, 1312, 1355, 3],
      ['g', 2814, 1312, 1380, 3], ['e', 2816, 1313, 1355, 2], ['g', 2819, 1314, 1482, 1], ['d', 2820, 1318, 1434, 1], ['m', 2823, 1319, 1356, 3],
      ['g', 2827, 1321, RIGHT, 2], ['y', 2829, 1327, 1544, 1], ['g', 2830, 1330, 1532, 2]
    ],
    dots: [
      [222, 2712], [256, 2734], [286, 2747], [482, 2715], [552, 2703], [765, 2705], [481, 2730], [1156, 2733], [1166, 2733], [1303, 2675],
      [1310, 2672], [1310, 2680], [1310, 2688], [1310, 2692], [1310, 2698], [1310, 2704], [1310, 2708], [1310, 2721], [1310, 2727], [1304, 2733],
      [1310, 2745], [1332, 2747], [1310, 2757], [1348, 2777], [1368, 2777], [1344, 2805], [1359, 2815], [1347, 2820], [1366, 2821], [703, 2757],
      [703, 2763], [703, 2769], [703, 2775], [703, 2781], [703, 2787], [703, 2792], [711, 2767], [711, 2784], [716, 2772], [706, 2775], [967, 2770],
      [1133, 2744], [1131, 2717], [961, 2756], [1086, 2746]
    ]
  });

  bar(ctx, '#000', 430, 2696, 440, 3);
  bar(ctx, '#000', 184, 2915, 201, 3);
  for (let i = 0; i < 80; i++) {
    ctx.fillStyle = rnd() < 0.75 ? GREEN : RED;
    ctx.fillRect(Math.round(172 + rnd() * 70), 2904 + Math.floor(rnd() * 30), 1, 4);
  }
  bar(ctx, '#222', 860, 2672, 861, 337);
  bar(ctx, '#c8c8c8', LEFT, 3043, RIGHT, 1);
}

// ruler ticks: 1,377 px cover 1,442 bp starting at 534,052
const scale = document.getElementById('scale');
for (let bp = 534100; bp <= 535400; bp += 100) {
  const x = Math.round((bp - 534052) * 1377 / 1442) - 1;
  const tick = document.createElement('div');
  tick.className = 'tick';
  tick.style.left = x + 'px';
  scale.appendChild(tick);
  if (bp % 200 === 0) {
    const label = document.createElement('div');
    label.className = 'tick-label';
    label.style.left = x + 'px';
    label.textContent = bp.toLocaleString('en-US') + ' bp';
    scale.appendChild(label);
  }
}

drawDisco('disco-a', 133, RIGHT, 233);
drawReadsA();
drawPacbio();
drawDisco('disco-b', 1999, 1458, 2099);
drawReadsB();
```
